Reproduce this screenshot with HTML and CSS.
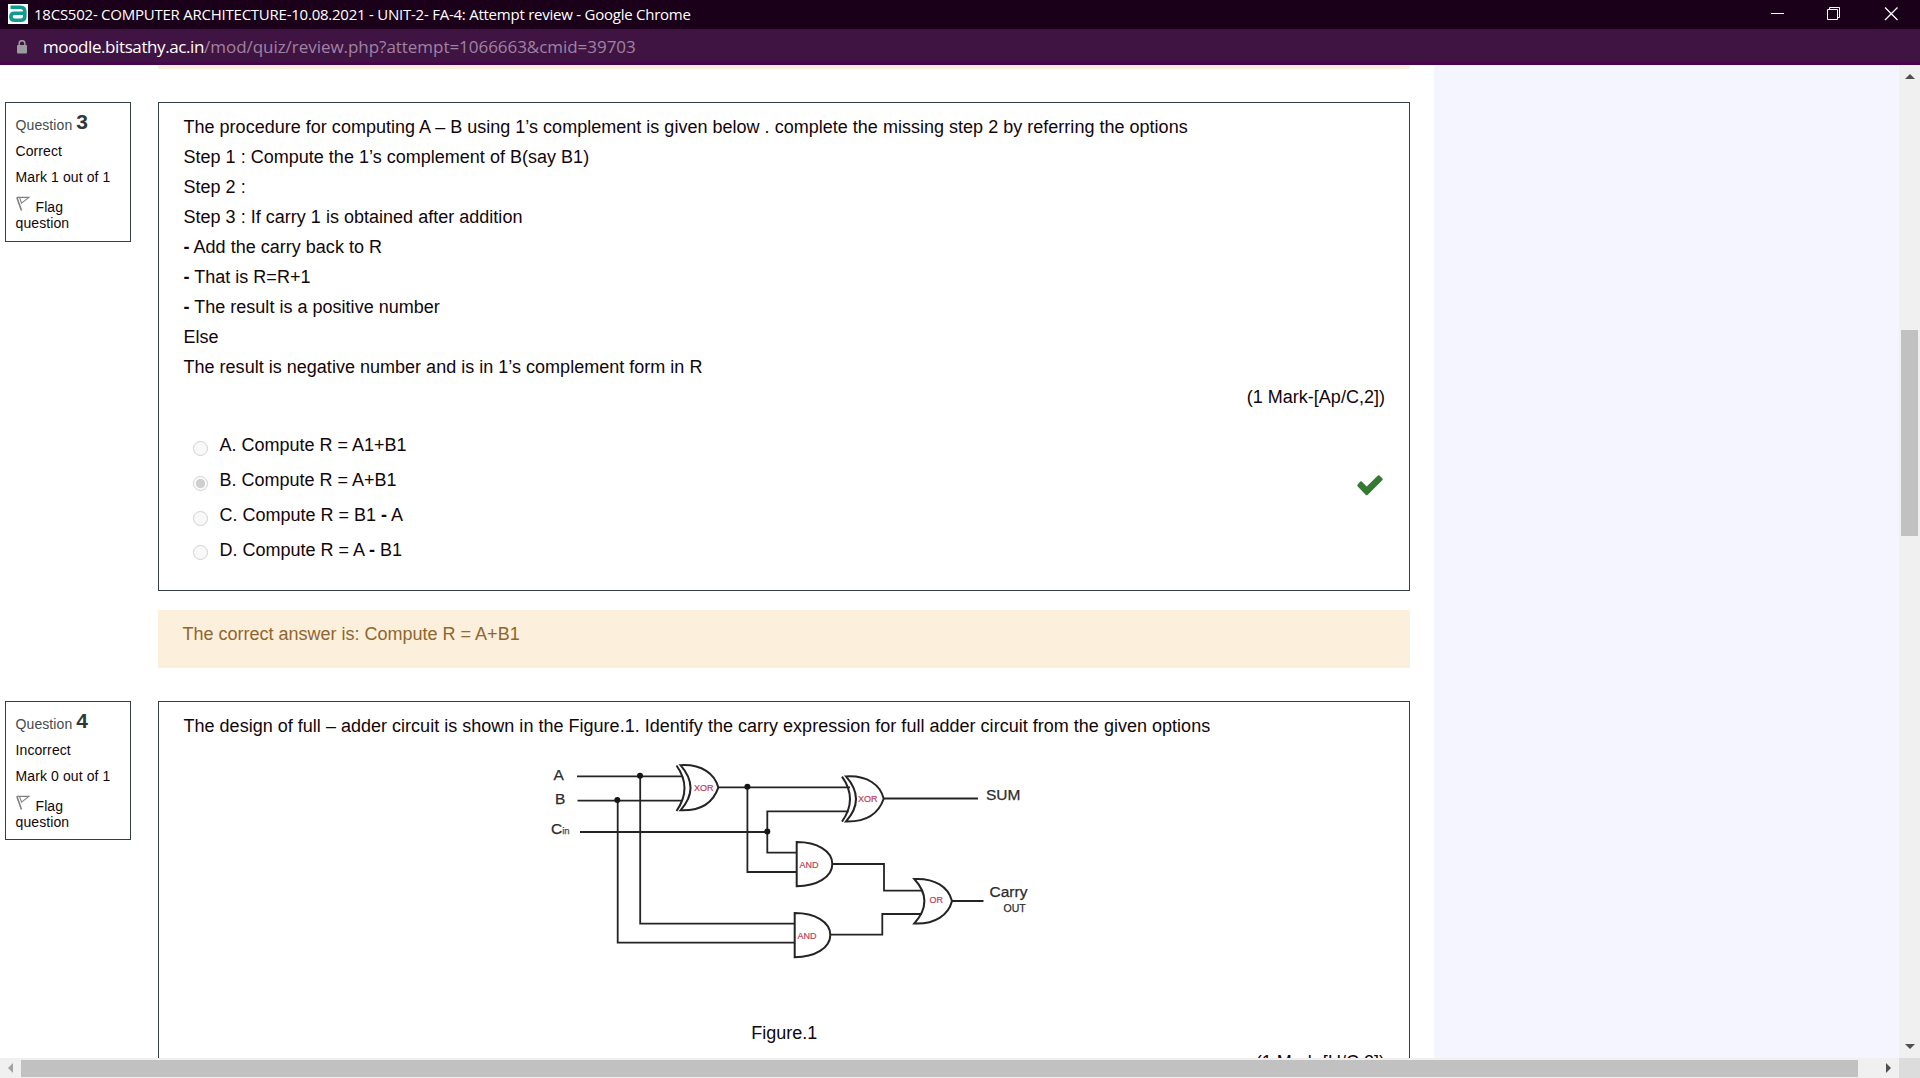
FILE: index.html
```html
<!DOCTYPE html>
<html lang="en">
<head>
<meta charset="utf-8">
<title>18CS502- COMPUTER ARCHITECTURE-10.08.2021 - UNIT-2- FA-4: Attempt review</title>
<link rel="stylesheet" href="styles.css">
</head>
<body>
<header class="titlebar">
  <svg class="favicon" width="20" height="20" viewBox="0 0 20 20"><rect width="20" height="20" fill="#fff"/><path d="M2.500 3.200H12.500Q16.800 3.200 16.800 7.500V12.500Q16.800 16.300 12.500 16.300H6.500Q2.900 16.300 2.900 12.800T6.500 9.300H16" fill="none" stroke="#119a8f" stroke-width="3.600"/></svg>
  <span class="title">18CS502- COMPUTER ARCHITECTURE-10.08.2021 - UNIT-2- FA-4: Attempt review - Google Chrome</span>
  <svg class="controls" width="130" height="14" viewBox="0 0 130 14" fill="none" stroke="#fff"><path d="M0 6.500H13"/><path d="M56.500 2.500H66.500V12.500H56.500ZM58.500 2.500V0.500H68.500V10.500H66.500"/><path d="M114 .5L126.500 13M126.500 .5L114 13" stroke-width="1.300"/></svg>
</header>
<div class="addressbar">
  <svg class="lock" width="10" height="14" viewBox="0 0 10 14"><path d="M2.200 6V3.500a2.800 2.800 0 0 1 5.600 0V6" fill="none" stroke="#9a9b9f" stroke-width="1.500"/><rect y="5" width="10" height="8.500" rx="1" fill="#9a9b9f"/></svg>
  <span class="url"><span class="host">moodle.bitsathy.ac.in</span><span class="path">/mod/quiz/review.php?attempt=1066663&amp;cmid=39703</span></span>
</div>
<div class="viewport">
  <main class="page">
    <div class="previous-feedback"></div>

    <section class="question">
      <aside class="info">
        <h3>Question <b>3</b></h3>
        <p>Correct</p>
        <p>Mark 1 out of 1</p>
        <p class="flag"><svg width="15" height="16" viewBox="0 0 15 16" fill="none" stroke="#808080"><path d="M.8 1.200L5.500 14.500" stroke-width="1.600"/><path d="M1 1.400H13L5.500 7.200L3.600 1.600" stroke-width="1.100"/></svg><span>Flag</span><br>question</p>
      </aside>
      <div class="content">
        <div class="formulation first">
          <p>The procedure for computing A – B using 1’s complement is given below . complete the missing step 2 by referring the options</p>
          <p>Step 1 : Compute the 1’s complement of B(say B1)</p>
          <p>Step 2 :</p>
          <p>Step 3 : If carry 1 is obtained after addition</p>
          <p><b>-</b> Add the carry back to R</p>
          <p><b>-</b> That is R=R+1</p>
          <p><b>-</b> The result is a positive number</p>
          <p>Else</p>
          <p>The result is negative number and is in 1’s complement form in R</p>
          <p class="marks">(1 Mark-[Ap/C,2])</p>
          <ul class="answers">
            <li><i class="radio"></i><span>A. Compute R = A1+B1</span></li>
            <li><i class="radio checked"></i><span>B. Compute R = A+B1</span><svg class="tick" width="26" height="21" viewBox="0 0 26 21"><path d="M3.300 6.500Q4 6 4.700 6.600L9.700 11.500L20.900 .6Q21.700 0 22.500 .6L25.500 3.600Q26 4.300 25.500 5L10.500 20Q9.700 20.700 8.900 20L.5 11.300Q0 10.500 .5 9.700Z" fill="#357a32"/></svg></li>
            <li><i class="radio"></i><span>C. Compute R = B1 <b>-</b> A</span></li>
            <li><i class="radio"></i><span>D. Compute R = A <b>-</b> B1</span></li>
          </ul>
        </div>
        <div class="feedback">The correct answer is: Compute R = A+B1</div>
      </div>
    </section>

    <section class="question">
      <aside class="info short">
        <h3>Question <b>4</b></h3>
        <p>Incorrect</p>
        <p>Mark 0 out of 1</p>
        <p class="flag"><svg width="15" height="16" viewBox="0 0 15 16" fill="none" stroke="#808080"><path d="M.8 1.200L5.500 14.500" stroke-width="1.600"/><path d="M1 1.400H13L5.500 7.200L3.600 1.600" stroke-width="1.100"/></svg><span>Flag</span><br>question</p>
      </aside>
      <div class="content">
        <div class="formulation">
          <p>The design of full – adder circuit is shown in the Figure.1. Identify the carry expression for full adder circuit from the given options</p>
          <svg class="circuit" width="520" height="220" viewBox="540 750 520 220">
            <g class="wires">
              <path d="M577 776.300H682M577.500 800.700H682M580 832H767.300"/>
              <path d="M640.200 776V923.700H794.500M617.700 800.500V942.700H794.500"/>
              <path d="M718 787.300H850M747.400 787.300V872H796.500"/>
              <path d="M848.500 811.300H767.300V852.700H796.500"/>
              <path d="M884 798.500H978M833 864H884V890.700H922M831 934.700H882.300V914H922M952 901H983.500"/>
            </g>
            <g class="gates">
              <path d="M676.500 765.500Q692.500 788 676.500 811M680.500 765.200C702 764 715 774 718.300 787.600C713 803 700 811 680.500 810.300Q700.500 788 680.500 765.200Z"/>
              <path d="M842 776.700Q858 799 842 821.700M846 776.400C867.500 775.200 880.500 785 883.700 798.800C878.500 814 865.500 822 846 821.500Q866 799 846 776.400Z"/>
              <path d="M796.700 842C817 842 832.300 851 832.300 864C832.300 877 817 886.200 796.700 886.200Z"/>
              <path d="M794.700 913C815 913 830.300 922 830.300 935C830.300 948 815 957.200 794.700 957.200Z"/>
              <path d="M914.300 879C935 878 948.500 887 952 901C948.500 915 935 924.500 914.300 923.500Q934.500 901 914.300 879Z"/>
            </g>
            <g class="nodes"><circle cx="640" cy="775.700" r="3"/><circle cx="617.300" cy="800" r="3"/><circle cx="747.400" cy="786.800" r="3"/><circle cx="767.300" cy="831.600" r="3"/></g>
            <g class="pin-labels">
              <text x="553.500" y="780">A</text><text x="555" y="803.500">B</text><text x="551" y="833.500">C<tspan class="sub">in</tspan></text>
              <text x="986" y="800">SUM</text><text x="989.500" y="897">Carry</text><text class="small" x="1003.500" y="911.500">OUT</text>
            </g>
            <g class="gate-labels">
              <text x="694" y="790.500">XOR</text><text x="858" y="802.300">XOR</text><text x="799.500" y="867.800">AND</text><text x="797.500" y="939">AND</text><text x="929.500" y="903.300">OR</text>
            </g>
          </svg>
          <p class="caption">Figure.1</p>
          <p class="marks">(1 Mark-[U/C,2])</p>
        </div>
      </div>
    </section>
  </main>
  <div class="gutter"></div>
  <div class="vscroll"><i class="arrow up"></i><div class="vthumb"></div><i class="arrow down"></i></div>
</div>
<footer class="hscroll"><i class="arrow left"></i><div class="hthumb"></div><i class="arrow right"></i><div class="corner"></div></footer>
</body>
</html>
```

FILE: styles.css
```css
* { box-sizing: border-box; }
body { margin: 0; width: 1920px; height: 1078px; overflow: hidden; display: flex; flex-direction: column; background: #fff; color: #12060a; font: 18px/30px "Liberation Sans", Arial, sans-serif; }
p, h3, ul { margin: 0; padding: 0; }

.titlebar { height: 29px; flex: none; display: flex; align-items: center; background: #1a0018; color: #fff; padding: 0 19px 1px 8px; font: 15px/28px "Open Sans", "Noto Sans", sans-serif; }
.title { margin-left: 6px; white-space: nowrap; letter-spacing: -.24px; }
.controls { margin: 0 0 1px auto; }
.addressbar { height: 36px; flex: none; display: flex; align-items: center; background: #3f1442; border-top: 1px solid #4b0a50; border-bottom: 3px solid #4a034f; padding-left: 17px; font: 17px/32px "Open Sans", "Noto Sans", sans-serif; }
.lock { margin-top: 1px; }
.url { margin: 2px 0 0 16px; white-space: nowrap; }
.host { color: #fff; letter-spacing: -.4px; }
.path { color: #a083a3; letter-spacing: -.04px; }

.viewport { height: 993px; flex: none; display: flex; overflow: hidden; }
.page { width: 1434px; flex: none; }
.previous-feedback { height: 4px; margin: 0 24px 33px 158px; background: #fcefdc; }
.question { display: flex; align-items: flex-start; gap: 27px; padding-left: 5px; margin-bottom: 33px; }
.info { width: 126px; flex: none; height: 140px; border: 1px solid #343f45; padding: 9px 9px 0 9.500px; font-size: 14px; line-height: 16px; letter-spacing: .1px; }
.info.short { height: 139px; }
.info h3 { font-size: 14px; font-weight: 400; line-height: 24px; color: #444b50; }
.info h3 b { font-size: 21px; line-height: 22px; color: #30373b; position: relative; top: -1px; }
.info p { margin-top: 10px; }
.info h3 + p { margin-top: 6px; }
.info .flag { margin-top: 11px; }
.flag svg { width: 15px; height: 16px; margin-right: 5px; }
.content { width: 1252px; flex: none; }
.formulation { border: 1px solid #343f45; padding: 9px 24px 0 24.500px; height: 600px; }
.formulation.first { height: 489px; }
.formulation p { white-space: nowrap; letter-spacing: .016px; }
.formulation .marks { text-align: right; }
.answers { list-style: none; margin-top: 18px; }
.answers li { display: flex; align-items: center; height: 30px; margin-bottom: 5px; padding-left: 9.500px; }
.radio { width: 15px; height: 15px; border: 1px solid #d2d2d2; border-radius: 50%; background: #f8f8f8; margin: 7px 11.500px 0 0; }
.radio.checked { background: radial-gradient(circle, #cfcfcf 0 4.300px, #fafafa 5px); }
.answers li:last-child .radio { margin-top: 5px; }
.tick { margin: 11px 2px 0 auto; }
.feedback { margin-top: 19px; height: 58px; padding: 9px 24.500px; background: #fcefdc; color: #8e662e; }
.circuit { display: block; margin: 9px 0 0 356.500px; }
.wires, .gates { fill: none; stroke: #242424; stroke-width: 1.800px; }
.gates { stroke-width: 2px; }
.nodes { fill: #151515; }
.pin-labels { fill: #2c2c2c; font-size: 15.500px; stroke: #2c2c2c; stroke-width: .25px; }
.sub { font-size: 9.500px; fill: #666; }
.small { font-size: 10.500px; }
.gate-labels { fill: #bd405c; font-size: 9px; stroke: #bd405c; stroke-width: .2px; }
.formulation .caption { text-align: center; margin-top: 48px; }
.caption + .marks { margin-top: -1px; }

.gutter { flex: 1; background: #f4f5fe; }
.vscroll { width: 21px; flex: none; background: #f0f0f0; display: flex; flex-direction: column; align-items: center; padding: 9px 0; }
.vthumb { width: 17px; height: 206px; margin-top: 251px; background: #c1c1c1; }
.arrow { width: 0; height: 0; flex: none; border: 5px solid transparent; }
.up { border-top: 0; border-bottom-color: #505050; }
.down { border-bottom: 0; border-top-color: #505050; margin-top: auto; }
.left { border-left: 0; border-right-color: #a3a3a3; margin: 0 8px; }
.right { border-right: 0; border-left-color: #505050; margin-left: auto; margin-right: 8px; }
.hscroll { height: 20px; flex: none; display: flex; align-items: center; background: #f0f0f0; }
.hthumb { width: 1837px; height: 17px; background: #c1c1c1; margin-top: 1px; }
.corner { width: 21px; height: 20px; background: #dcdcdc; }
```
